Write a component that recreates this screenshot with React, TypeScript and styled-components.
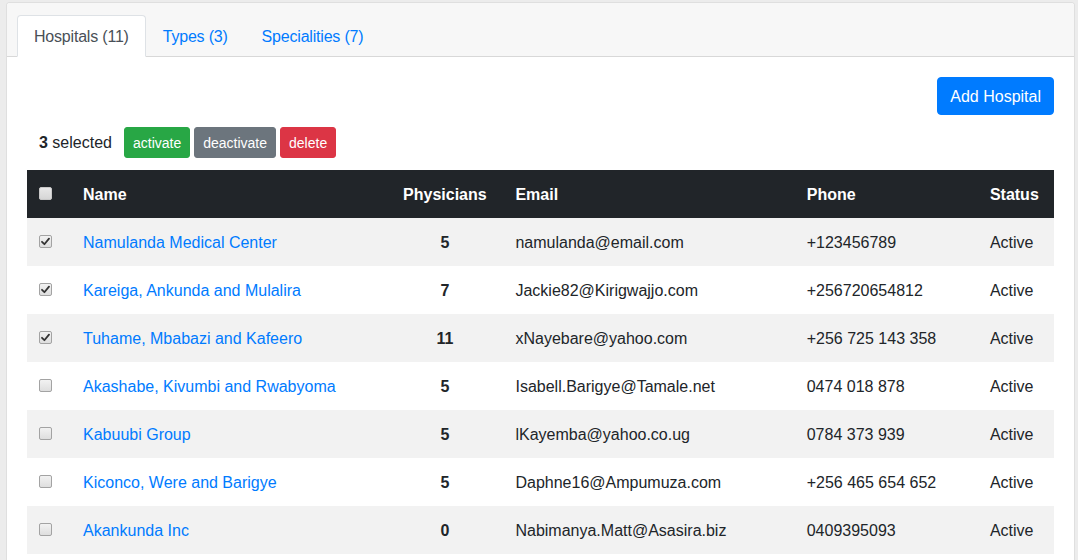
import React from "react";
import styled, { createGlobalStyle, css } from "styled-components";

const GlobalStyle = createGlobalStyle`
  html, body {
    margin: 0;
    padding: 0;
    background: #ececec;
  }
  body {
    font-family: "Liberation Sans", Arial, sans-serif;
    font-size: 16px;
    line-height: 1.5;
    color: #212529;
  }
  * { box-sizing: border-box; }
`;

const Page = styled.div`
  padding: 2px 3px 0 6px;
`;

const Card = styled.div`
  background: #fff;
  border: 1px solid rgba(0, 0, 0, 0.125);
  border-radius: 4px;
  overflow: hidden;
`;

const CardHeader = styled.div`
  background: #f7f7f7;
  border-bottom: 1px solid rgba(0, 0, 0, 0.125);
  padding: 12px 10px 0;
`;

const Tabs = styled.ul`
  display: flex;
  list-style: none;
  margin: 0 0 -1px;
  padding: 0;
`;

const Tab = styled.li<{ $active?: boolean }>`
  padding: 9px 16px 7px;
  border: 1px solid transparent;
  border-top-left-radius: 4px;
  border-top-right-radius: 4px;
  color: #007bff;
  letter-spacing: -0.2px;
  cursor: pointer;
  ${(p) =>
    p.$active &&
    css`
      color: #495057;
      background: #fff;
      border-color: #dee2e6 #dee2e6 #fff;
    `}
`;

const CardBody = styled.div`
  padding: 20px;
`;

const TopBar = styled.div`
  display: flex;
  justify-content: flex-end;
  margin-bottom: 12px;
`;

const PrimaryButton = styled.button`
  font: inherit;
  color: #fff;
  background: #007bff;
  border: 1px solid #007bff;
  border-radius: 4px;
  padding: 7px 12px 5px;
  line-height: 24px;
  height: 38px;
  cursor: pointer;
`;

const ActionsRow = styled.div`
  display: flex;
  align-items: center;
  padding-left: 12px;
  margin-bottom: 12px;
`;

const Selected = styled.span`
  margin-right: 12px;
  padding-top: 1px;
  b { font-weight: 700; }
`;

const variants = {
  success: "#28a745",
  secondary: "#6c757d",
  danger: "#dc3545",
};

const SmallButton = styled.button<{ $variant: keyof typeof variants }>`
  font-family: inherit;
  font-size: 14px;
  line-height: 21px;
  height: 31px;
  padding: 5px 8px 3px;
  color: #fff;
  background: ${(p) => variants[p.$variant]};
  border: 1px solid ${(p) => variants[p.$variant]};
  border-radius: 3px;
  margin-right: 4px;
  cursor: pointer;
`;

const Table = styled.table`
  width: 100%;
  border-collapse: collapse;
  table-layout: fixed;
`;

const Th = styled.th<{ $center?: boolean }>`
  background: #212529;
  color: #fff;
  font-weight: 700;
  padding: 13px 12px 11px;
  height: 48px;
  text-align: ${(p) => (p.$center ? "center" : "left")};
  vertical-align: top;
`;

const Row = styled.tr`
  &:nth-child(odd) {
    background: #f2f2f2;
  }
`;

const Td = styled.td<{ $center?: boolean; $bold?: boolean }>`
  padding: 13px 12px 11px;
  height: 48px;
  vertical-align: top;
  white-space: nowrap;
  text-align: ${(p) => (p.$center ? "center" : "left")};
  font-weight: ${(p) => (p.$bold ? 700 : 400)};
`;

const Link = styled.a`
  color: #007bff;
  text-decoration: none;
  cursor: pointer;
`;

const Box = styled.span<{ $dark?: boolean }>`
  display: block;
  width: 13px;
  height: 13px;
  margin-top: 4px;
  border: 1px solid ${(p) => (p.$dark ? "#c8c8c8" : "#a3a3a3")};
  border-radius: 2px;
  background: ${(p) =>
    p.$dark
      ? "linear-gradient(#e8e8e8, #d6d6d6)"
      : "linear-gradient(#f2f2f2, #dedede)"};
  position: relative;
  svg {
    position: absolute;
    left: 1px;
    top: 1px;
  }
`;

function Checkbox({ checked, dark }: { checked?: boolean; dark?: boolean }) {
  return (
    <Box $dark={dark} role="checkbox" aria-checked={!!checked}>
      {checked && (
        <svg width="9" height="9" viewBox="0 0 9 9">
          <path
            d="M1 4.8 L3.4 7.2 L8 1.6"
            fill="none"
            stroke="#333"
            strokeWidth="1.8"
            strokeLinecap="round"
            strokeLinejoin="round"
          />
        </svg>
      )}
    </Box>
  );
}

type Hospital = {
  name: string;
  physicians: number;
  email: string;
  phone: string;
  status: string;
  checked: boolean;
};

const hospitals: Hospital[] = [
  { name: "Namulanda Medical Center", physicians: 5, email: "namulanda@email.com", phone: "+123456789", status: "Active", checked: true },
  { name: "Kareiga, Ankunda and Mulalira", physicians: 7, email: "Jackie82@Kirigwajjo.com", phone: "+256720654812", status: "Active", checked: true },
  { name: "Tuhame, Mbabazi and Kafeero", physicians: 11, email: "xNayebare@yahoo.com", phone: "+256 725 143 358", status: "Active", checked: true },
  { name: "Akashabe, Kivumbi and Rwabyoma", physicians: 5, email: "Isabell.Barigye@Tamale.net", phone: "0474 018 878", status: "Active", checked: false },
  { name: "Kabuubi Group", physicians: 5, email: "lKayemba@yahoo.co.ug", phone: "0784 373 939", status: "Active", checked: false },
  { name: "Kiconco, Were and Barigye", physicians: 5, email: "Daphne16@Ampumuza.com", phone: "+256 465 654 652", status: "Active", checked: false },
  { name: "Akankunda Inc", physicians: 0, email: "Nabimanya.Matt@Asasira.biz", phone: "0409395093", status: "Active", checked: false },
];

export default function App() {
  return (
    <>
      <GlobalStyle />
      <Page>
        <Card>
          <CardHeader>
            <Tabs>
              <Tab $active>Hospitals (11)</Tab>
              <Tab>Types (3)</Tab>
              <Tab>Specialities (7)</Tab>
            </Tabs>
          </CardHeader>
          <CardBody>
            <TopBar>
              <PrimaryButton>Add Hospital</PrimaryButton>
            </TopBar>
            <ActionsRow>
              <Selected>
                <b>3</b> selected
              </Selected>
              <SmallButton $variant="success">activate</SmallButton>
              <SmallButton $variant="secondary">deactivate</SmallButton>
              <SmallButton $variant="danger">delete</SmallButton>
            </ActionsRow>
            <Table>
              <colgroup>
                <col style={{ width: 44 }} />
                <col style={{ width: 315 }} />
                <col style={{ width: 117 }} />
                <col style={{ width: 291 }} />
                <col style={{ width: 183 }} />
                <col style={{ width: 76 }} />
              </colgroup>
              <thead>
                <tr>
                  <Th>
                    <Checkbox dark />
                  </Th>
                  <Th>Name</Th>
                  <Th $center>Physicians</Th>
                  <Th>Email</Th>
                  <Th>Phone</Th>
                  <Th>Status</Th>
                </tr>
              </thead>
              <tbody>
                {hospitals.map((h) => (
                  <Row key={h.name}>
                    <Td>
                      <Checkbox checked={h.checked} />
                    </Td>
                    <Td>
                      <Link>{h.name}</Link>
                    </Td>
                    <Td $center $bold>
                      {h.physicians}
                    </Td>
                    <Td>{h.email}</Td>
                    <Td>{h.phone}</Td>
                    <Td>{h.status}</Td>
                  </Row>
                ))}
              </tbody>
            </Table>
          </CardBody>
        </Card>
      </Page>
    </>
  );
}
